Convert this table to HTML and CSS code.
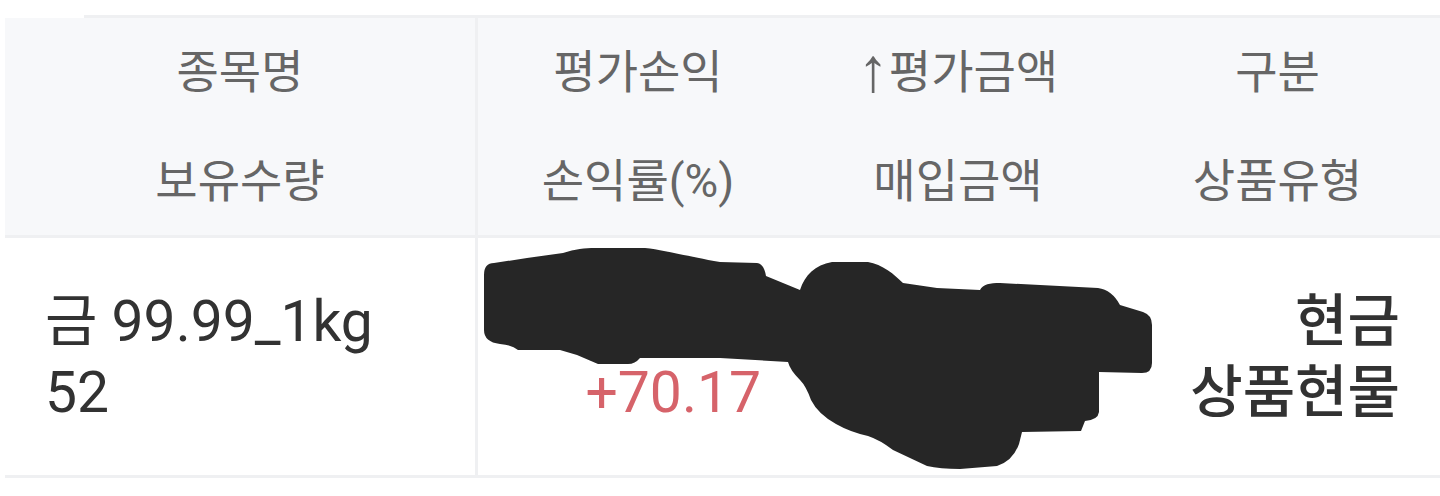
FILE: index.html
```html
<!DOCTYPE html>
<html lang="ko">
<head>
  <meta charset="UTF-8">
  <title>보유종목</title>
  <link rel="stylesheet" href="styles.css">
</head>
<body>
  <div class="table">
    <div class="topline"></div>
    <div class="thead">
      <div class="th first"><span>종목명</span><span>보유수량</span></div>
      <div class="th"><span>평가손익</span><span>손익률(%)</span></div>
      <div class="th"><span><i class="arrow">↑</i>평가금액</span><span>매입금액</span></div>
      <div class="th"><span>구분</span><span>상품유형</span></div>
    </div>
    <div class="trow">
      <div class="td first"><span>금 99.99_1kg</span><span>52</span></div>
      <div class="td num"><span>&nbsp;</span><span class="up">+70.17</span></div>
      <div class="td num"><span>&nbsp;</span><span>&nbsp;</span></div>
      <div class="td num strong"><span>현금</span><span>상품현물</span></div>
    </div>
  </div>

  <!-- redaction scribble over the amounts -->
  <svg class="redact" viewBox="0 0 1440 496" width="1440" height="496">
    <path d="M484 275 Q484 263 494 263 L527 258 L563 253 C575 249 585 248 595 248 L645 248 C665 250 685 256 720 262 L757 263 Q764 264 766 276 L800 290 C805 275 815 265 832 262 L868 262 C882 264 895 275 903 283 L937 288 L980 290 C983 284 990 283 1000 283 L1098 288 Q1112 290 1120 305 L1143 312 Q1152 315 1152 325 L1152 363 Q1152 373 1142 373 L1099 372 L1099 412 Q1098 420 1085 421 L1081 431 L1022 432 L1019 444 Q1013 461 997 466 L960 469 Q940 469 927 466 L893 450 Q880 440 868 436 Q850 432 836 424 Q818 414 811 400 Q806 386 800 380 Q790 370 788 362 L720 358 L640 358 Q635 364 628 364 L598 364 L577 355 L560 350 L518 350 Q512 345 500 344 Q484 342 484 330 Z" fill="#262626"/>
  </svg>
</body>
</html>
```

FILE: styles.css
```css
body {
  margin: 0;
  background: #fff;
  font-family: Roboto, "Noto Sans CJK KR", sans-serif;
  position: relative;
  height: 496px;
  overflow: hidden;
}
.table {
  margin: 15px 0 0 5px;
}
.topline {
  height: 3px;
  margin-left: 79px;
  background: #eff0f2;
}
.thead, .trow {
  display: grid;
  grid-template-columns: 473px 320px 320px 319px;
}
.thead {
  background: #f7f8fa;
  border-bottom: 3px solid #eff0f2;
}
.trow {
  border-bottom: 3px solid #eff0f2;
}
.first {
  border-right: 3px solid #eff0f2;
}
.th {
  display: flex;
  flex-direction: column;
  color: #666;
  font-size: 46px;
  text-align: center;
}
.th span {
  height: 108px;
  line-height: 108px;
}
.th span:first-child {
  height: 109px;
}
.arrow {
  font-style: normal;
  font-family: "Liberation Sans", "Noto Sans CJK KR", sans-serif;
  font-size: 62px;
  line-height: 1;
  vertical-align: -3px;
}
.td {
  height: 237px;
  display: flex;
  flex-direction: column;
  justify-content: center;
  padding: 0 37px 0 40px;
  color: #323232;
  font-size: 57px;
  line-height: 71px;
}
.num {
  text-align: right;
}
.strong {
  font-weight: 500;
}
.up {
  color: #d6636a;
}
.redact {
  position: absolute;
  left: 0;
  top: 0;
  pointer-events: none;
}
```
